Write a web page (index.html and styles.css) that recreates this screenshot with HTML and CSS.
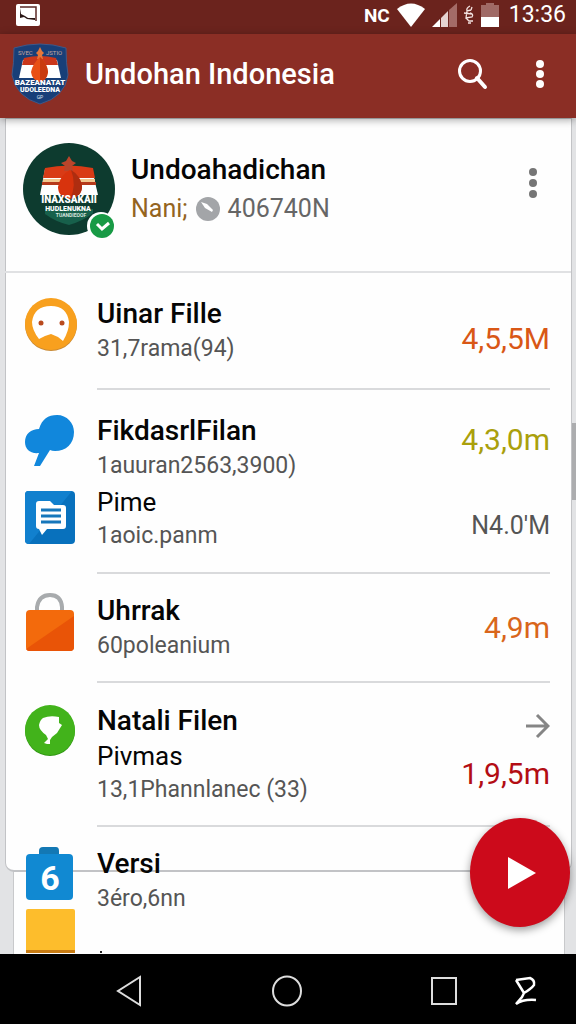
FILE: index.html
```html
<!DOCTYPE html>
<html lang="id">
<head>
    <meta charset="UTF-8">
    <meta name="viewport" content="width=device-width, initial-scale=1.0">
    <title>Undohan Indonesia</title>
    <link rel="stylesheet" href="styles.css">
</head>
<body>
    <div class="status-bar">
        <svg class="picture-icon" width="24" height="22" viewBox="0 0 24 22">
            <rect width="24" height="22" rx="2" fill="#fff"/>
            <path d="M4 3H20V17" fill="none" stroke="#5b2a27" stroke-width="1.5"/>
            <path d="M4 4L5 10L9 12L12 14L19 14V16L11 15L8 13L4 14z" fill="#2b1716"/>
        </svg>
        <div class="status-icons">
            <span class="nfc">NC</span>
            <svg width="30" height="24" viewBox="0 0 30 24"><path d="M1 6Q15-5 29 6L15 24z" fill="#fff"/></svg>
            <svg width="25" height="24" viewBox="0 0 25 24">
                <path d="M0 24L8 16V24z" fill="#fff"/>
                <path d="M9 24V15L16 8V24z" fill="#e5d3d1"/>
                <path d="M17 24V7L25 0V24z" fill="#a46b67"/>
            </svg>
            <svg width="12" height="20" viewBox="0 0 12 20"><path d="M7 1Q3 3 4 6L8 5M1 8L9 9M4 6L3 13L9 12Q11 9 7 8M9 2L8 5M3 13L6 16L10 16M5 18L8 18" fill="none" stroke="#f3e3e1" stroke-width="1.3"/></svg>
            <svg width="18" height="24" viewBox="0 0 18 24">
                <path d="M5 0h8v2h5v13H0V2h5z" fill="#a06a66"/>
                <path d="M0 14h18v10H0z" fill="#fff"/>
            </svg>
            <time class="clock">13:36</time>
        </div>
    </div>

    <header class="app-bar">
        <svg class="crest" width="58" height="62" viewBox="0 0 58 62">
            <path d="M29 1Q42 1 55 5Q55 20 57 32Q54 54 29 61Q5 54 1 32Q3 20 3 5Q16 1 29 1z" fill="#183f78" stroke="#415887" stroke-width="1"/>
            <path d="M8 35L12 17Q29 13 46 17L50 35z" fill="#fff"/>
            <path d="M11 22L13 15Q29 11 45 15L47 22z" fill="#c9371c"/>
            <path d="M29 4l2 4 2 2-2 2 1 4h-6l1-4-2-2 2-2z" fill="#e5773a"/>
            <path d="M29 14Q36 20 37 29Q36 37 29 39Q21 37 20 29Q22 20 29 14z" fill="#e95016"/>
            <path d="M29 14Q36 20 37 29Q36 37 29 39z" fill="#c93b10"/>
            <text x="7" y="12" font-size="6" fill="#c5a6a0">SVEC</text>
            <text x="35" y="12" font-size="6" fill="#c5a6a0">JSTIO</text>
            <text x="29" y="42" font-size="8" font-weight="900" fill="#fff" text-anchor="middle">BAZEANATAT</text>
            <text x="29" y="49" font-size="7" font-weight="900" fill="#fff" text-anchor="middle">UDOLEEDNA</text>
            <text x="29" y="56" font-size="5" fill="#dfe6f2" text-anchor="middle">GP</text>
        </svg>
        <h1>Undohan Indonesia</h1>
        <button class="icon-button" aria-label="Cari">
            <svg width="32" height="32" viewBox="0 0 32 32"><circle cx="13" cy="13" r="10.5" fill="none" stroke="#fff" stroke-width="3"/><path d="M20 20L28 29" stroke="#fff" stroke-width="4" stroke-linecap="round"/></svg>
        </button>
        <button class="icon-button" aria-label="Menu">
            <svg width="10" height="30" viewBox="0 0 10 30" fill="#fff"><circle cx="5" cy="5" r="4"/><circle cx="5" cy="15" r="4"/><circle cx="5" cy="25" r="4"/></svg>
        </button>
    </header>

    <main>
        <section class="profile">
            <div class="avatar">
                <svg width="92" height="92" viewBox="0 0 92 92">
                    <circle cx="46" cy="46" r="46" fill="#0d3b2f"/>
                    <path d="M22 71Q33 79 46 82Q60 78 70 70V66H22z" fill="#17604b"/>
                    <path d="M17 52L22 26Q46 21 69 26L75 52z" fill="#fff"/>
                    <path d="M20 35L22 25Q46 20 70 25L72 35z" fill="#d93b16"/>
                    <path d="M20 36H72V39H20z" fill="#f2c78e"/>
                    <path d="M19 39H73V42H19z" fill="#b63a1b"/>
                    <path d="M46 13l3 5 4 2-4 3 1 5h-9l1-5-4-3 5-2z" fill="#b9452b"/>
                    <path d="M47 27Q57 32 59 43Q59 54 47 56Q35 54 35 44Q37 32 47 27z" fill="#d8330d"/>
                    <path d="M48 27Q57 32 59 43Q59 54 47 56Q54 42 48 27z" fill="#ae2d10"/>
                    <text x="46" y="60" font-size="10" font-weight="900" fill="#fff" text-anchor="middle">INAXSAKAII</text>
                    <text x="45" y="68" font-size="7" font-weight="900" fill="#fff" text-anchor="middle">HUDLENUKNA</text>
                    <text x="48" y="74" font-size="5" font-weight="700" fill="#d7e5df" text-anchor="middle">TUANDIEOOF</text>
                </svg>
                <svg class="verified" width="28" height="28" viewBox="0 0 28 28"><circle cx="14" cy="14" r="14" fill="#fff"/><circle cx="15" cy="14" r="12" fill="#189a45"/><path d="M10 12l5 5 7-6" fill="none" stroke="#fff" stroke-width="3"/></svg>
            </div>
            <div class="profile-text">
                <h2>Undoahadichan</h2>
                <p><span class="nick">Nani;</span>
                    <svg width="26" height="26" viewBox="0 0 26 26"><circle cx="13" cy="13" r="12" fill="#a3a5a8"/><path d="M6 6L12 8L18 14L17 16L10 12z" fill="#fff"/></svg>
                    <span>406740N</span></p>
            </div>
            <button class="icon-button" aria-label="Opsi">
                <svg width="10" height="32" viewBox="0 0 10 32" fill="#757575"><circle cx="5" cy="5" r="4"/><circle cx="5" cy="16" r="4"/><circle cx="5" cy="27" r="4"/></svg>
            </button>
        </section>

        <ul class="files">
            <li class="file">
                <svg class="file-icon" width="52" height="56" viewBox="0 0 52 56">
                    <circle cx="26" cy="28" r="26" fill="#c98a35"/><circle cx="26" cy="27" r="26" fill="#f8a01e"/>
                    <path d="M14 42Q7 33 7 25Q9 9 26 9Q42 9 44 25Q44 34 38 44L33 40L26 37L20 39z" fill="#fff"/>
                    <circle cx="16" cy="26" r="2.5" fill="#b94a1e"/><circle cx="37" cy="26" r="2.5" fill="#b94a1e"/>
                </svg>
                <div class="file-body end">
                    <div>
                        <h3>Uinar Fille</h3>
                        <p>31,7rama(94)</p>
                    </div>
                    <span class="size orange">4,5,5M</span>
                </div>
            </li>
            <li class="file">
                <svg class="file-icon" width="52" height="56" viewBox="0 0 52 56">
                    <path d="M14 15C17 5 23 1 32 1C42 1 49 9 49 18C49 30 41 37 30 37Q27 37 25 36L15 52H9L14 39C5 40 0 35 0 28C0 20 6 15 14 15z" fill="#1187dc"/>
                </svg>
                <div class="file-body joined">
                    <div>
                        <h3>FikdasrlFilan</h3>
                        <p>1auuran2563,3900)</p>
                    </div>
                    <span class="size olive">4,3,0m</span>
                </div>
            </li>
            <li class="file compact">
                <svg class="file-icon" width="52" height="56" viewBox="0 0 52 56">
                    <rect y="1" width="50" height="53" rx="4" fill="#0871bd"/><path d="M3 1H47L4 54Q0 54 0 50V5Q0 1 3 1" fill="#1180ce"/>
                    <path d="M14 11h11l4 4h9q3 0 3 3v18q0 3-3 3H22l-5 6-3-6q-3 0-3-3V14q0-3 3-3z" fill="#fff"/>
                    <path d="M16 20h20M16 26h20M16 32h20" stroke="#1677bb" stroke-width="3"/>
                </svg>
                <div class="file-body end">
                    <div>
                        <h4>Pime</h4>
                        <p>1aoic.panm</p>
                    </div>
                    <span class="size grey">N4.0'M</span>
                </div>
            </li>
            <li class="file short">
                <svg class="file-icon" width="52" height="60" viewBox="0 0 52 60">
                    <path d="M12 20V15Q14 3 25 3Q36 3 37 15V20" fill="none" stroke="#a8abad" stroke-width="4"/>
                    <rect x="1" y="18" width="48" height="41" rx="4" fill="#f36a0c"/>
                    <path d="M49 24V55Q49 59 45 59H4Q2 59 1 57z" fill="#e95407"/>
                </svg>
                <div class="file-body">
                    <div>
                        <h3>Uhrrak</h3>
                        <p>60poleanium</p>
                    </div>
                    <span class="size amber">4,9m</span>
                </div>
            </li>
            <li class="file tall">
                <svg class="file-icon" width="52" height="56" viewBox="0 0 52 56">
                    <circle cx="25" cy="26" r="25" fill="#309613"/><circle cx="25" cy="25" r="25" fill="#42b31b"/>
                    <path d="M18 13Q25 10 34 12V18L37 20L32 28L27 32L25 35V39H22L19 38L23 34L21 30Q14 25 14 20Q15 15 18 13z" fill="#fff"/>
                </svg>
                <div class="file-body">
                    <div>
                        <h3>Natali Filen</h3>
                        <h4>Pivmas</h4>
                        <p>13,1Phannlanec (33)</p>
                    </div>
                    <div class="side">
                        <svg width="24" height="44" viewBox="0 0 24 44"><path d="M0 23H22M11 12L22 23L11 34" fill="none" stroke="#858585" stroke-width="3"/></svg>
                        <span class="size red">1,9,5m</span>
                    </div>
                </div>
            </li>
            <li class="file last">
                <svg class="file-icon" width="52" height="56" viewBox="0 0 52 56">
                    <path d="M14 8V4Q14 0 18 0H31Q34 0 34 4V8z" fill="#1378b4"/>
                    <rect x="1" y="7" width="47" height="46" rx="4" fill="#1189d2"/>
                    <text x="25" y="43" font-size="34" font-weight="700" fill="#fff" text-anchor="middle">6</text>
                </svg>
                <div class="file-body">
                    <div>
                        <h3>Versi</h3>
                        <p>3éro,6nn</p>
                    </div>
                </div>
            </li>
            <li class="file folder">
                <svg class="file-icon" width="52" height="44" viewBox="0 0 52 44"><rect x="1" width="49" height="44" rx="2" fill="#fdbd2c"/><path d="M1 41H50V44H1z" fill="#c87c13"/></svg>
                <div class="file-body">
                    <svg width="8" height="2" viewBox="0 0 8 2"><rect x="3" width="2" height="2" fill="#222"/></svg>
                </div>
            </li>
        </ul>
        <span class="scroll-thumb"></span>
        <button class="play" aria-label="Putar">
            <svg width="30" height="34" viewBox="0 0 30 34"><path d="M1 1L29 17L1 33z" fill="#fff"/></svg>
        </button>
    </main>

    <nav class="nav-bar">
        <button class="icon-button" aria-label="Kembali">
            <svg width="26" height="32" viewBox="0 0 26 32"><path d="M24 2V30L2 16z" fill="none" stroke="#ddd" stroke-width="2"/></svg>
        </button>
        <button class="icon-button" aria-label="Beranda">
            <svg width="30" height="32" viewBox="0 0 30 32"><ellipse cx="15" cy="16" rx="14" ry="14.5" fill="none" stroke="#ddd" stroke-width="2"/></svg>
        </button>
        <div class="nav-end">
            <button class="icon-button" aria-label="Terbaru">
                <svg width="26" height="28" viewBox="0 0 26 28"><rect x="1" y="1" width="24" height="26" fill="none" stroke="#ddd" stroke-width="2"/></svg>
            </button>
            <button class="icon-button" aria-label="Pintasan">
                <svg width="24" height="30" viewBox="0 0 24 30"><path d="M2 4L16 2Q21 4 20 9Q17 13 10 17L2 4M10 17L8 21L2 28Q9 23 22 24" fill="none" stroke="#fff" stroke-width="2.5"/></svg>
            </button>
        </div>
    </nav>
</body>
</html>
```

FILE: styles.css
```css
* { box-sizing: border-box; margin: 0; padding: 0; }
body {
    display: flex;
    flex-direction: column;
    height: 100vh;
    font-family: Roboto, "Liberation Sans", sans-serif;
    background-color: #e2e3e5;
    color: #050505;
}
h1, h2, h3, h4 { font-weight: 500; }
svg { display: block; flex-shrink: 0; }
.icon-button { display: flex; background: none; border: none; cursor: pointer; }

/* Status bar */
.status-bar {
    display: flex;
    justify-content: space-between;
    align-items: center;
    height: 34px;
    padding: 0 10px 4px 16px;
    background-color: #6b231d;
    color: #fff;
}
.status-icons { display: flex; align-items: center; gap: 6px; }
.nfc { font-size: 19px; font-weight: 700; }
.clock { margin-left: 4px; font-size: 23px; line-height: 28px; }

/* App bar */
.app-bar {
    position: relative;
    z-index: 1;
    display: flex;
    align-items: center;
    height: 84px;
    padding: 0 31px 4px 11px;
    background-color: #8b2e25;
    color: #fff;
    box-shadow: 0 2px 8px rgba(0,0,0,0.35);
}
.app-bar h1 { flex: 1; margin-left: 16px; font-size: 29px; }
.app-bar .icon-button + .icon-button { margin-left: 46px; }

/* Two stacked sheets behind the list */
main {
    position: relative;
    z-index: 0;
    flex: 1;
    min-height: 0;
    overflow: hidden;
}
main::before, main::after {
    content: "";
    position: absolute;
    z-index: -1;
    top: 0;
    background-color: #fefefe;
}
main::before {
    left: 13px;
    right: 11px;
    bottom: 0;
    border: 1px solid #c8c9cb;
    border-bottom: none;
}
main::after {
    left: 5px;
    right: 4px;
    bottom: 82px;
    border: 1px solid #c2c3c6;
    border-bottom-width: 2px;
    border-radius: 0 0 9px 9px;
}

.profile {
    display: flex;
    align-items: flex-start;
    height: 155px;
    margin: 0 5px;
    padding: 25px 33px 0 18px;
    border-bottom: 2px solid #e0e1e3;
}
.avatar { position: relative; }
.verified { position: absolute; right: 0; bottom: -5px; }
.profile-text { flex: 1; margin-left: 16px; padding-top: 8px; }
.profile-text h2 { font-size: 28px; line-height: 38px; }
.profile-text p { display: flex; align-items: center; gap: 7px; font-size: 25px; line-height: 40px; color: #666; }
.profile-text .nick { color: #94641f; }
.profile .icon-button { margin-top: 24px; }

/* File list */
.files { list-style-type: none; }
.file { display: flex; gap: 20px; padding: 0 26px 0 25px; }
.file-icon { margin-top: 24px; }
.file-body {
    display: flex;
    flex: 1;
    justify-content: space-between;
    align-items: center;
    padding: 23px 0 22px;
    border-bottom: 2px solid #d9dadc;
}
.file-body.end { align-items: flex-end; }
.file-body.joined { align-items: flex-start; padding-bottom: 2px; border-bottom: none; }
.file h3 { font-size: 28px; line-height: 36px; }
.file h4 { font-size: 26px; line-height: 34px; font-weight: 400; }
.file p { font-size: 23px; line-height: 34px; color: #555; }
.compact .file-body { padding: 0 0 19px; }
.compact .file-icon { margin-top: 5px; }
.short .file-body { padding: 19px 0 18px; }
.short .file-icon { margin-top: 18px; }
.tall .file-body { padding: 20px 0 18px; }
.tall .file-icon { margin-top: 22px; }
.last .file-icon { margin-top: 20px; }
.last .file-body { padding: 19px 0 0; border-bottom: none; }
.folder { margin-top: -7px; }
.folder .file-icon { margin-top: 0; }
.folder .file-body { align-items: flex-end; padding: 0; border-bottom: none; }

.size { font-size: 30px; line-height: 54px; }
.side { display: flex; flex-direction: column; align-items: flex-end; align-self: flex-start; }
.orange { color: #d95716; }
.olive { color: #aaa00c; }
.grey { font-size: 25px; color: #555; }
.amber { color: #d9661b; }
.red { color: #b30d14; }

.scroll-thumb {
    position: absolute;
    top: 305px;
    right: 0;
    width: 4px;
    height: 77px;
    background-color: #acadaf;
}
.play {
    position: absolute;
    right: 6px;
    bottom: 27px;
    display: flex;
    justify-content: center;
    align-items: center;
    width: 100px;
    height: 109px;
    padding-left: 4px;
    border: none;
    border-radius: 50%;
    background-color: #cc0a1b;
    box-shadow: 0 3px 8px rgba(0,0,0,0.4);
    cursor: pointer;
}

/* Navigation bar */
.nav-bar {
    display: flex;
    justify-content: space-between;
    align-items: center;
    height: 70px;
    padding: 4px 38px 0 116px;
    background-color: #000;
}
.nav-end { display: flex; align-items: center; gap: 57px; }
```
